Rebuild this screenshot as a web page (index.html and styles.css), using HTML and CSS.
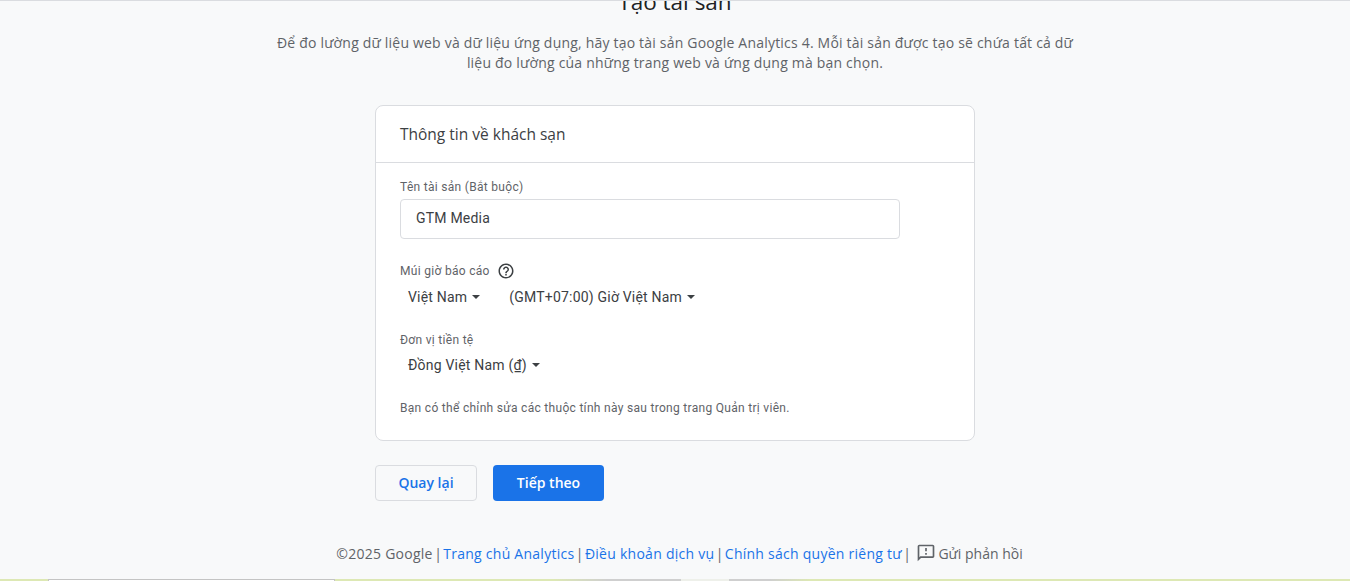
FILE: index.html
```html
<!DOCTYPE html>
<html lang="vi">
<head>
<meta charset="utf-8">
<title>Tạo tài sản</title>
<link rel="stylesheet" href="styles.css">
</head>
<body>
<main class="page">
  <h1 class="title">Tạo tài sản</h1>
  <p class="intro">Để đo lường dữ liệu web và dữ liệu ứng dụng, hãy tạo tài sản Google Analytics 4. Mỗi tài sản được tạo sẽ chứa tất cả dữ liệu đo lường của những trang web và ứng dụng mà bạn chọn.</p>
  <section class="card">
    <h2 class="card-head">Thông tin về khách sạn</h2>
    <div class="card-body">
      <div class="label">Tên tài sản (Bắt buộc)</div>
      <div class="input">GTM Media</div>
      <div class="label label-tz">Múi giờ báo cáo
        <svg class="help" viewBox="0 0 24 24" width="18" height="18"><path fill="#3c4043" d="M11 18h2v-2h-2v2zm1-16C6.48 2 2 6.48 2 12s4.48 10 10 10 10-4.48 10-10S17.52 2 12 2zm0 18c-4.41 0-8-3.59-8-8s3.59-8 8-8 8 3.59 8 8-3.59 8-8 8zm0-14c-2.21 0-4 1.79-4 4h2c0-1.1.9-2 2-2s2 .9 2 2c0 2-3 1.75-3 5h2c0-2.25 3-2.5 3-5 0-2.21-1.79-4-4-4z"/></svg>
      </div>
      <div class="selects selects-tz">
        <span class="select">Việt Nam<i class="caret"></i></span>
        <span class="select select-tz">(GMT+07:00) Giờ Việt Nam<i class="caret"></i></span>
      </div>
      <div class="label label-cur">Đơn vị tiền tệ</div>
      <div class="selects selects-cur">
        <span class="select">Đồng Việt Nam (₫)<i class="caret"></i></span>
      </div>
      <p class="hint">Bạn có thể chỉnh sửa các thuộc tính này sau trong trang Quản trị viên.</p>
    </div>
  </section>
  <div class="actions">
    <button class="btn btn-back">Quay lại</button>
    <button class="btn btn-next">Tiếp theo</button>
  </div>
  <footer class="footer">
    <span class="spaced">©2025 Google</span>
    <span>|</span>
    <a class="spaced">Trang chủ Analytics</a>
    <span>|</span>
    <a class="spaced">Điều khoản dịch vụ</a>
    <span>|</span>
    <a class="spaced">Chính sách quyền riêng tư</a>
    <span>|</span>
    <span class="feedback">
      <svg viewBox="0 0 24 24" width="20" height="20"><path fill="#5f6368" d="M20 2H4c-1.1 0-2 .9-2 2v18l4-4h14c1.1 0 2-.9 2-2V4c0-1.1-.9-2-2-2zm0 14H5.17L4 17.17V4h16v12zM11 12h2v2h-2zm0-6h2v4h-2z"/></svg>
      Gửi phản hồi
    </span>
  </footer>
</main>
<div class="strip"><div class="strip-tab"></div><div class="strip-thumb"></div></div>
</body>
</html>
```
FILE: styles.css
```css
* { box-sizing: border-box; }
html, body { margin: 0; height: 581px; overflow: hidden; }
body {
  background: #f8f9fa;
  border-top: 1px solid #dadce0;
  font-family: "Roboto", "Liberation Sans", sans-serif;
  color: #3c4043;
  display: flex;
  flex-direction: column;
}
.page { flex: 1; display: flex; flex-direction: column; align-items: center; overflow: hidden; }
.title {
  margin: -15px 0 0;
  height: 35px;
  line-height: 32px;
  font-family: "Open Sans", sans-serif;
  font-size: 22.5px;
  font-weight: 400;
  color: #202124;
}
.intro {
  margin: 12px 0 0;
  width: 806px;
  text-align: center;
  font-family: "Open Sans", sans-serif;
  font-size: 14px;
  line-height: 20px;
  letter-spacing: .2px;
  color: #5f6368;
}
.card {
  margin-top: 32px;
  width: 600px;
  height: 336px;
  background: #fff;
  border: 1px solid #dadce0;
  border-radius: 8px;
}
.card-head {
  margin: 0;
  height: 57px;
  padding: 0 24px 1px;
  display: flex;
  align-items: center;
  border-bottom: 1px solid #dadce0;
  font-family: "Open Sans", sans-serif;
  font-size: 15.5px;
  font-weight: 400;
  color: #3c4043;
}
.card-body { padding: 16px 24px 0; }
.label { font-size: 12px; line-height: 16px; color: #5f6368; letter-spacing: .3px; }
.input {
  margin-top: 4px;
  width: 500px;
  height: 40px;
  padding: 0 15px 2px;
  display: flex;
  align-items: center;
  border: 1px solid #dadce0;
  border-radius: 4px;
  font-size: 14px;
  color: #3c4043;
  letter-spacing: .2px;
}
.label-tz { margin-top: 23px; display: flex; align-items: center; gap: 7px; height: 18px; }
.label-cur { margin-top: 23px; }
.selects { display: flex; height: 24px; align-items: center; padding-left: 8px; }
.selects-tz { margin-top: 5px; }
.selects-cur { margin-top: 5px; }
.select { display: inline-flex; align-items: center; font-size: 14px; color: #3c4043; letter-spacing: .2px; }
.select-tz { margin-left: 29px; }
.caret {
  margin-left: 5px;
  width: 0; height: 0;
  border-left: 4.5px solid transparent;
  border-right: 4.5px solid transparent;
  border-top: 4.5px solid #3c4043;
}
.hint { margin: 23px 0 0; font-size: 12px; line-height: 16px; color: #5f6368; letter-spacing: .3px; }
.actions { margin-top: 24px; width: 600px; display: flex; gap: 16px; }
.btn {
  height: 36px;
  border-radius: 4px;
  font-family: "Open Sans", sans-serif;
  font-size: 14px;
  font-weight: 600;
  padding: 0 0 2px;
}
.btn-back { background: transparent; border: 1px solid #dadce0; color: #1a73e8; width: 102px; }
.btn-next { background: #1a73e8; border: 0; color: #fff; width: 111px; }
.footer {
  margin: 40px 0 0 9px;
  display: flex;
  align-items: center;
  gap: 1.4px;
  height: 24px;
  font-family: "Open Sans", sans-serif;
  font-size: 14px;
  color: #5f6368;
  white-space: nowrap;
}
.spaced { letter-spacing: .26px; }
.footer a { color: #1a73e8; }
.feedback { display: inline-flex; align-items: center; gap: 2px; margin-left: 4px; }
.strip {
  position: fixed;
  left: 0; right: 0; bottom: 0;
  height: 2px;
  background: linear-gradient(90deg, #dde8b4 0, #dde8b4 41%, #cfcfcf 45%, #cfcfcf 57%, #dde8b4 60%);
}
.strip-tab { position: absolute; left: 48px; width: 287px; top: 0; height: 2px; background: #fff; border: 1px solid #c4c4c4; border-bottom: 0; }
.strip-thumb { position: absolute; left: 681px; width: 48px; top: 0; height: 2px; background: #eef0ea; }
```
